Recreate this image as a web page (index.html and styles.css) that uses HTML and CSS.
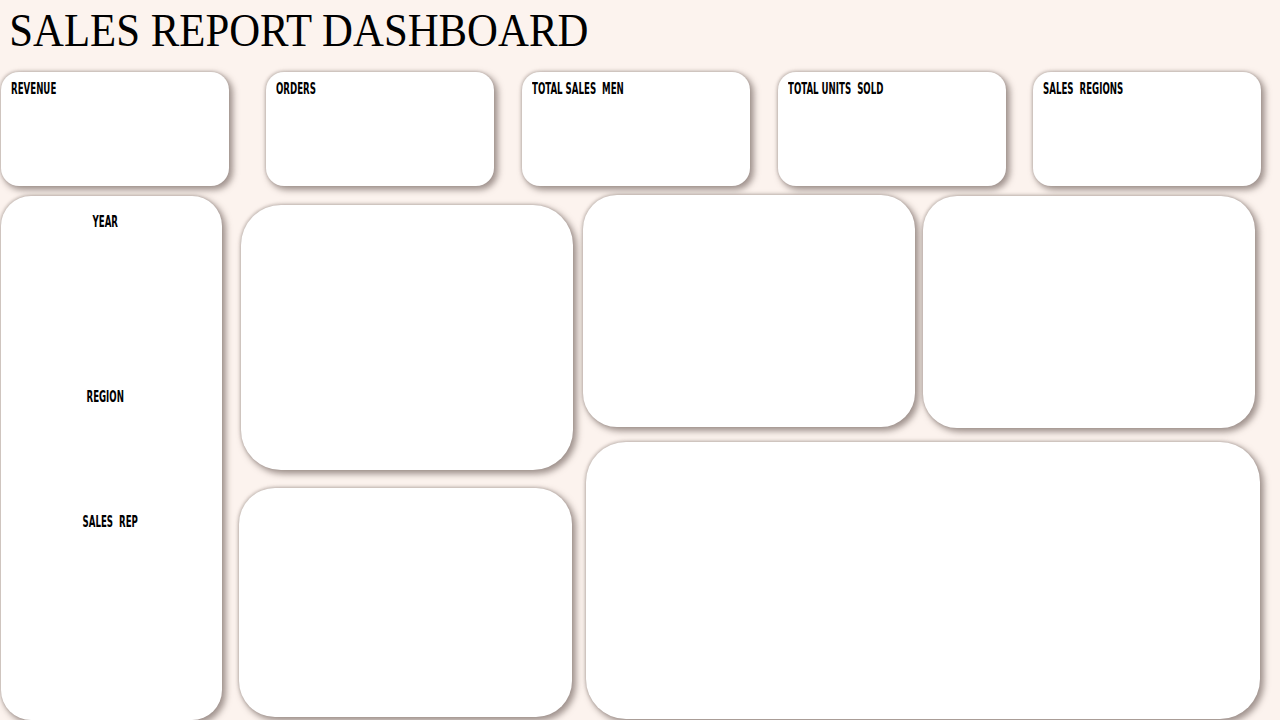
FILE: index.html
```html
<!DOCTYPE html>
<html>
<head>
<meta charset="utf-8">
<link rel="stylesheet" href="styles.css">
</head>
<body>
<h1 class="title">SALES REPORT DASHBOARD</h1>
<div class="kpis">
  <div class="card kpi first"><span class="label">REVENUE</span></div>
  <div class="card kpi"><span class="label">ORDERS</span></div>
  <div class="card kpi"><span class="label">TOTAL SALES  MEN</span></div>
  <div class="card kpi"><span class="label">TOTAL UNITS  SOLD</span></div>
  <div class="card kpi"><span class="label">SALES  REGIONS</span></div>
</div>
<div class="main">
  <div class="card sidebar">
    <div class="filter year"><span class="label">YEAR</span></div>
    <div class="filter region"><span class="label">REGION</span></div>
    <div class="filter rep"><span class="label">SALES  REP</span></div>
  </div>
  <div class="mid">
    <div class="card chart-a"></div>
    <div class="card chart-b"></div>
  </div>
  <div class="right">
    <div class="right-top">
      <div class="card chart-c"></div>
      <div class="card chart-d"></div>
    </div>
    <div class="card chart-e"></div>
  </div>
</div>
</body>
</html>
```
FILE: styles.css
```css
html, body {
  margin: 0;
  padding: 0;
  background: #fcf3ee;
  overflow: hidden;
  width: 1280px;
  height: 720px;
}
.title {
  margin: 0;
  padding: 7px 0 0 10px;
  height: 58px;
  box-sizing: border-box;
  font-family: "Liberation Serif", "Times New Roman", serif;
  font-weight: normal;
  font-size: 46px;
  line-height: 48px;
  color: #000;
  white-space: nowrap;
  transform: scaleX(0.93);
  transform-origin: left top;
}
.card {
  background: #fff;
  box-shadow: 3px 3px 6px 1px rgba(110, 95, 90, 0.65), -1px -1px 3px rgba(110, 95, 90, 0.3);
  box-sizing: border-box;
}
.label {
  display: inline-block;
  font-family: "Liberation Sans Narrow", "DejaVu Sans Condensed", "Liberation Sans", sans-serif;
  font-weight: bold;
  font-size: 16px;
  line-height: 16px;
  color: #000;
  white-space: pre;
  transform: scaleX(0.6);
  transform-origin: left top;
}
.kpis {
  display: flex;
  gap: 28px;
  margin-top: 14px;
  padding-left: 1px;
}
.kpi {
  width: 228px;
  height: 114px;
  border-radius: 18px;
  padding: 8px 0 0 10px;
}
.kpi.first {
  margin-right: 9px;
}
.kpi:last-child {
  margin-left: -1px;
}
.main {
  display: flex;
  margin-top: 10px;
  align-items: flex-start;
}
.sidebar {
  margin-left: 1px;
  width: 221px;
  height: 524px;
  border-radius: 30px;
  display: flex;
  flex-direction: column;
  align-items: center;
  padding-right: 12px;
}
.sidebar .label {
  transform-origin: center top;
}
.filter.year { margin-top: 17px; }
.filter.region { margin-top: 157px; }
.filter.rep { margin-top: 107px; padding-left: 10px; }
.mid {
  margin-left: 17px;
  width: 334px;
  display: flex;
  flex-direction: column;
}
.chart-a {
  margin-top: 9px;
  margin-left: 2px;
  width: 332px;
  height: 265px;
  border-radius: 40px;
}
.chart-b {
  margin-top: 18px;
  width: 333px;
  height: 229px;
  border-radius: 36px;
}
.right {
  margin-left: 10px;
  display: flex;
  flex-direction: column;
}
.right-top {
  display: flex;
  gap: 8px;
  align-items: flex-start;
  margin-top: -1px;
}
.chart-c {
  width: 332px;
  height: 232px;
  border-radius: 34px;
}
.chart-d {
  margin-top: 1px;
  width: 332px;
  height: 232px;
  border-radius: 34px;
}
.chart-e {
  margin-top: 14px;
  margin-left: 3px;
  width: 674px;
  height: 277px;
  border-radius: 40px;
}
```
